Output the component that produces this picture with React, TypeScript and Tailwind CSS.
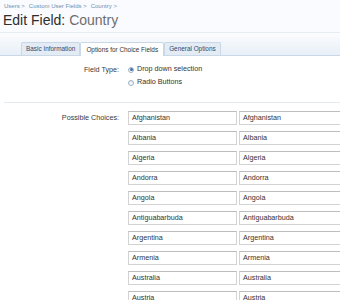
const countries = [
  "Afghanistan",
  "Albania",
  "Algeria",
  "Andorra",
  "Angola",
  "Antiguabarbuda",
  "Argentina",
  "Armenia",
  "Australia",
  "Austria",
];

function Radio({ checked }: { checked?: boolean }) {
  return (
    <span className="w-[6px] h-[6px] rounded-full border border-[#9fb0c2] bg-gradient-to-b from-[#e4e9ef] to-[#ffffff] flex items-center justify-center shrink-0">
      {checked && <span className="w-[3px] h-[3px] rounded-full bg-[#3f6fa8]" />}
    </span>
  );
}

export default function App() {
  return (
    <div className="w-[340px] h-[300px] overflow-hidden bg-[#fafbfe] font-['Liberation_Sans',Arial,sans-serif] text-[#333]">
      {/* breadcrumb */}
      <div className="h-[10px] leading-[12px] pl-[4px] text-[6px] text-[#6f8eb0] flex gap-[4px] whitespace-nowrap">
        <span>Users &gt;</span>
        <span>Custom User Fields &gt;</span>
        <span>Country &gt;</span>
      </div>

      <h1 className="h-[22px] leading-[20px] pl-[3px] text-[14px] whitespace-nowrap">
        <span className="text-[#2d2d2d]">Edit Field: </span>
        <span className="text-[#6e6e6e]">Country</span>
      </h1>

      {/* tabs */}
      <div className="h-[24px] border-t border-[#e6ecf3] border-b border-b-[#c9d7e6] bg-gradient-to-b from-[#fbfcfe] to-[#e8eff7] flex items-end pl-[21px] text-[6.4px] whitespace-nowrap">
        <div className="h-[13px] px-[4px] flex items-center border border-b-0 border-[#c9d7e6] bg-[#e3ebf4] text-[#2f4c6e] rounded-t-[2px]">
          Basic Information
        </div>
        <div className="h-[14px] -mb-px px-[5px] flex items-center border border-b-0 border-[#c9d7e6] bg-white text-[#333] rounded-t-[2px]">
          Options for Choice Fields
        </div>
        <div className="h-[13px] px-[4px] flex items-center border border-b-0 border-[#c9d7e6] bg-[#e3ebf4] text-[#2f4c6e] rounded-t-[2px]">
          General Options
        </div>
      </div>

      {/* form */}
      <div className="bg-white h-full pt-[7px]">
        <div className="flex text-[7.2px] whitespace-nowrap">
          <div className="w-[119px] text-right leading-[13px] text-[#3a3a3a]">Field Type:</div>
          <div className="ml-[9px] flex flex-col">
            <label className="h-[13px] flex items-center gap-[3px]">
              <Radio checked />
              <span>Drop down selection</span>
            </label>
            <label className="h-[13px] flex items-center gap-[3px]">
              <Radio />
              <span>Radio Buttons</span>
            </label>
          </div>
        </div>

        <div className="mt-[13px] ml-[4px] border-t border-[#e1eaf3]" />

        <div className="flex pt-[8px] text-[7.2px] whitespace-nowrap">
          <div className="w-[119px] shrink-0 text-right leading-[14px] text-[#3a3a3a]">Possible Choices:</div>
          <div className="ml-[9px] flex flex-col gap-[6px]">
            {countries.map((c) => (
              <div key={c} className="flex gap-[2px]">
                <div className="w-[109px] h-[14px] shrink-0 border border-[#d3d3d3] border-t-[#bdbdbd] bg-white pl-[3px] leading-[12px]">
                  {c}
                </div>
                <div className="w-[109px] h-[14px] shrink-0 border border-[#d3d3d3] border-t-[#bdbdbd] bg-white pl-[3px] leading-[12px]">
                  {c}
                </div>
              </div>
            ))}
          </div>
        </div>
      </div>
    </div>
  );
}
